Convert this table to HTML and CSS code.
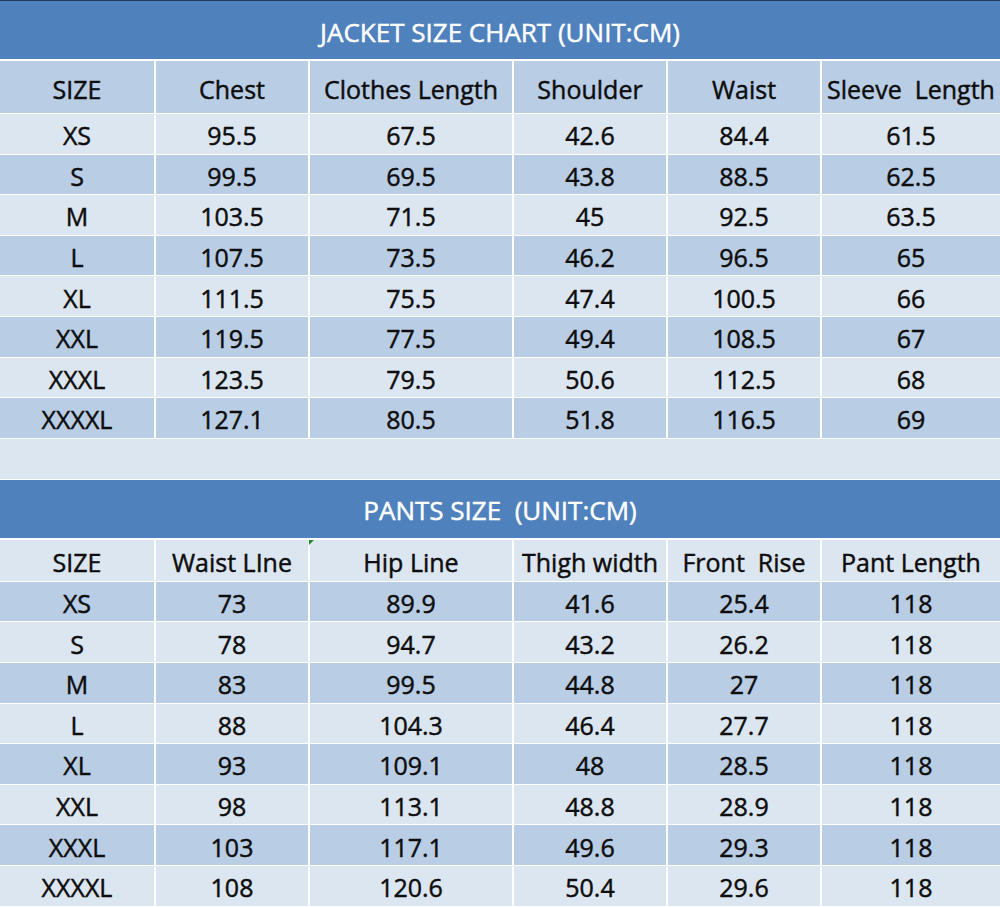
FILE: index.html
```html
<!DOCTYPE html>
<html>
<head>
<meta charset="utf-8">
<link rel="stylesheet" href="styles.css">
</head>
<body>
<div class="sheet">
  <div class="topline"></div>
  <div class="title">JACKET SIZE CHART (UNIT:CM)</div>
  <div class="grid jacket">
    <div class="c h">SIZE</div><div class="c h">Chest</div><div class="c h">Clothes Length</div><div class="c h">Shoulder</div><div class="c h">Waist</div><div class="c h">Sleeve&nbsp; Length</div>
    <div class="c l">XS</div><div class="c l">95.5</div><div class="c l">67.5</div><div class="c l">42.6</div><div class="c l">84.4</div><div class="c l">61.5</div>
    <div class="c d">S</div><div class="c d">99.5</div><div class="c d">69.5</div><div class="c d">43.8</div><div class="c d">88.5</div><div class="c d">62.5</div>
    <div class="c l">M</div><div class="c l">103.5</div><div class="c l">71.5</div><div class="c l">45</div><div class="c l">92.5</div><div class="c l">63.5</div>
    <div class="c d">L</div><div class="c d">107.5</div><div class="c d">73.5</div><div class="c d">46.2</div><div class="c d">96.5</div><div class="c d">65</div>
    <div class="c l">XL</div><div class="c l">111.5</div><div class="c l">75.5</div><div class="c l">47.4</div><div class="c l">100.5</div><div class="c l">66</div>
    <div class="c d">XXL</div><div class="c d">119.5</div><div class="c d">77.5</div><div class="c d">49.4</div><div class="c d">108.5</div><div class="c d">67</div>
    <div class="c l">XXXL</div><div class="c l">123.5</div><div class="c l">79.5</div><div class="c l">50.6</div><div class="c l">112.5</div><div class="c l">68</div>
    <div class="c d">XXXXL</div><div class="c d">127.1</div><div class="c d">80.5</div><div class="c d">51.8</div><div class="c d">116.5</div><div class="c d">69</div>
  </div>
  <div class="spacer"></div>
  <div class="title">PANTS SIZE&nbsp; (UNIT:CM)</div>
  <div class="grid pants">
    <div class="c l hp">SIZE</div><div class="c l hp">Waist LIne</div><div class="c l hp mark">Hip Line</div><div class="c l hp">Thigh width</div><div class="c l hp">Front&nbsp; Rise</div><div class="c l hp">Pant Length</div>
    <div class="c d">XS</div><div class="c d">73</div><div class="c d">89.9</div><div class="c d">41.6</div><div class="c d">25.4</div><div class="c d">118</div>
    <div class="c l">S</div><div class="c l">78</div><div class="c l">94.7</div><div class="c l">43.2</div><div class="c l">26.2</div><div class="c l">118</div>
    <div class="c d">M</div><div class="c d">83</div><div class="c d">99.5</div><div class="c d">44.8</div><div class="c d">27</div><div class="c d">118</div>
    <div class="c l">L</div><div class="c l">88</div><div class="c l">104.3</div><div class="c l">46.4</div><div class="c l">27.7</div><div class="c l">118</div>
    <div class="c d">XL</div><div class="c d">93</div><div class="c d">109.1</div><div class="c d">48</div><div class="c d">28.5</div><div class="c d">118</div>
    <div class="c l">XXL</div><div class="c l">98</div><div class="c l">113.1</div><div class="c l">48.8</div><div class="c l">28.9</div><div class="c l">118</div>
    <div class="c d">XXXL</div><div class="c d">103</div><div class="c d">117.1</div><div class="c d">49.6</div><div class="c d">29.3</div><div class="c d">118</div>
    <div class="c l">XXXXL</div><div class="c l">108</div><div class="c l">120.6</div><div class="c l">50.4</div><div class="c l">29.6</div><div class="c l">118</div>
  </div>
</div>
</body>
</html>
```

FILE: styles.css
```css
html, body {
  margin: 0;
  padding: 0;
  background: #ffffff;
}

.sheet {
  width: 1000px;
  height: 907px;
  overflow: hidden;
  display: flex;
  flex-direction: column;
  font-family: "Open Sans", "Noto Sans", "Liberation Sans", sans-serif;
  font-weight: 400;
  color: #0d0d0d;
  background: #ffffff;
  -webkit-text-stroke: 0.45px currentColor;
}

.topline {
  height: 1px;
  background: #23395a;
  flex: none;
}

.title {
  flex: none;
  height: 58px;
  padding-top: 3px;
  box-sizing: border-box;
  background: #4f81bd;
  color: #ffffff;
  font-size: 26px;
  display: flex;
  align-items: center;
  justify-content: center;
  margin-bottom: 2px;
  white-space: pre;
}

.grid {
  flex: none;
  display: grid;
  grid-template-columns: 154px 152px 202px 152px 152px 178px;
  column-gap: 2px;
  row-gap: 1px;
  background: #ffffff;
}

.jacket {
  grid-template-rows: 52px repeat(8, 39.6px);
}

.pants {
  grid-template-rows: 41px repeat(8, 39.6px);
}

.c {
  display: flex;
  align-items: center;
  justify-content: center;
  font-size: 25px;
  padding-top: 3px;
  white-space: pre;
}

.h {
  background: #b9cde5;
}

.d {
  background: #b9cde5;
}

.l {
  background: #dce6f1;
}

.mark {
  position: relative;
}

.mark::before {
  content: "";
  position: absolute;
  left: -1px;
  top: 0;
  width: 0;
  height: 0;
  border-top: 5px solid #1e8a2a;
  border-right: 5px solid transparent;
}

.spacer {
  flex: none;
  height: 40px;
  background: #dce6f1;
  margin-top: 1px;
  margin-bottom: 1px;
}
```
